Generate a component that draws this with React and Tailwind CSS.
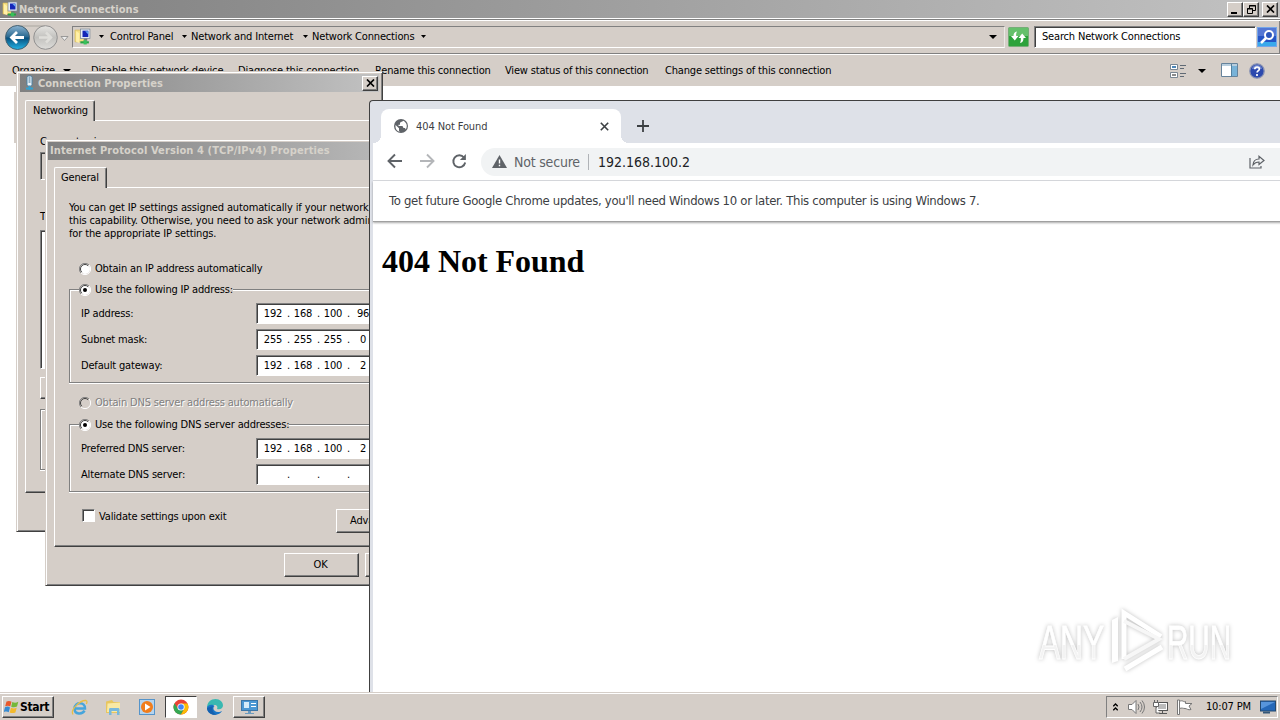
import React from 'react';
import clsx from 'clsx';

const raised = 'bg-[#d5cec8] border border-t-white border-l-white border-r-[#404040] border-b-[#404040] shadow-[inset_-1px_-1px_0_#808080]';
const sunken = 'bg-white border border-t-[#808080] border-l-[#808080] border-r-white border-b-white shadow-[inset_1px_1px_0_#404040]';

const Caret = ({ className, big }) => (
  <svg className={clsx('shrink-0', className)} width={big ? 8 : 5} height={big ? 4 : 3} viewBox="0 0 8 4" preserveAspectRatio="none">
    <path d="M0 0h8L4 4z" fill="#000" />
  </svg>
);

const NetworkIcon = ({ size }) => (
  <svg width={size} height={size} viewBox="0 0 16 16" className="shrink-0">
    <path d="M1 2h5l1 1h2v10H1z" fill="#f5df83" stroke="#d8b84e" strokeWidth=".6" />
    <path d="M2 3l3 2v9l-3-1z" fill="#fff0a8" />
    <rect x="6" y="1" width="9" height="9" fill="#e8eef7" stroke="#7b8796" strokeWidth=".7" />
    <rect x="8" y="2.5" width="5.5" height="6" fill="#1526b8" />
    <path d="M10.5 3h3v3z" fill="#65a9f4" />
    <path d="M9.5 10h3v2h-3z" fill="#777" />
    <path d="M6 12.5h8v2H6z" fill="#25a443" />
    <path d="M9 11.5h3v4H9z" fill="#38c15a" />
  </svg>
);

const CloseGlyph = () => (
  <svg width="9" height="8" viewBox="0 0 9 8">
    <path d="M1 .5l7 7M8 .5l-7 7" stroke="#000" strokeWidth="1.7" />
  </svg>
);

const CaptionButton = ({ children, className }) => (
  <div className={clsx('flex h-[15px] w-4 shrink-0 items-center justify-center', raised, className)}>{children}</div>
);

const crumbs = [
  { label: 'Control Panel', width: 'w-[66px]' },
  { label: 'Network and Internet', width: 'w-[106px]' },
  { label: 'Network Connections', width: 'w-[103px]' },
];

const commands = [
  { label: 'Disable this network device', width: 'w-[147px]' },
  { label: 'Diagnose this connection', width: 'w-[137px]' },
  { label: 'Rename this connection', width: 'w-[130px]' },
  { label: 'View status of this connection', width: 'w-[160px]' },
  { label: 'Change settings of this connection', width: 'w-[180px]' },
];

const Explorer = () => (
  <div className="flex h-[692px] flex-col bg-white">
    <div className="flex h-[18px] items-center bg-linear-to-r from-[#808080] to-[#c2c2c2] pl-0.5 pr-[2px]">
      <NetworkIcon size={16} />
      <span className="mt-px ml-px grow font-['DejaVu_Sans_Condensed'] text-[11px] font-bold tracking-[0.02px] text-[#d6d2ca]">Network Connections</span>
      <CaptionButton><span className="mt-[7px] -ml-0.5 h-0.5 w-1.5 bg-black" /></CaptionButton>
      <CaptionButton>
        <svg width="9" height="9" viewBox="0 0 9 9">
          <path d="M2.5 3V.5h6v5H6M2 1h7" fill="none" stroke="#000" />
          <path d="M.5 3.5h5v5h-5zM0 4h6" fill="none" stroke="#000" />
        </svg>
      </CaptionButton>
      <CaptionButton className="ml-[3px]"><CloseGlyph /></CaptionButton>
    </div>

    <div className="mt-px flex h-[35px] items-center border-y border-[#808080] bg-[#d5cec8] pr-0.5 shadow-[inset_0_1px_0_#fff,inset_-1px_0_0_#808080]">
      <svg width="72" height="28" viewBox="0 0 72 28" className="shrink-0">
        <defs>
          <linearGradient id="back" x1="0" y1="0" x2="0" y2="1">
            <stop offset="0" stopColor="#8cb4d2" />
            <stop offset=".48" stopColor="#28688f" />
            <stop offset=".52" stopColor="#07507e" />
            <stop offset="1" stopColor="#23b4e6" />
          </linearGradient>
          <linearGradient id="forward" x1="0" y1="0" x2="0" y2="1">
            <stop offset="0" stopColor="#e6e5e2" />
            <stop offset=".5" stopColor="#c2c1be" />
            <stop offset="1" stopColor="#deddda" />
          </linearGradient>
        </defs>
        <path d="M17 3h28" stroke="#aaa7a0" />
        <circle cx="17.5" cy="14.5" r="12" fill="url(#back)" stroke="#44606f" />
        <path d="M24 14.500H12m5-5.500L11.500 14.500l5.500 5.500" fill="none" stroke="#fff" strokeWidth="2.800" />
        <circle cx="45.500" cy="14.500" r="11.800" fill="url(#forward)" stroke="#929191" />
        <path d="M39 14.500h12m-5-5l5 5-5 5" fill="none" stroke="#dfdeda" strokeWidth="2.500" />
        <path d="M61 13.500h7l-3.500 4z" fill="#eee" stroke="#888" strokeWidth=".8" />
      </svg>
      <div className="flex h-[22px] w-[933px] items-center border border-t-[#808080] border-l-[#808080] border-r-[#eceae6] border-b-white pl-px">
        <NetworkIcon size={17} />
        <Caret className="ml-[8px] mr-[6px]" />
        {crumbs.map(({ label, width }) => (
          <div key={label} className="flex items-center">
            <span className={width}>{label}</span>
            <Caret className="mr-[4px] ml-[6px]" />
          </div>
        ))}
        <Caret big className="ml-auto mr-[7px]" />
      </div>
      <svg width="21" height="20" viewBox="0 0 21 20" className="ml-[3px] shrink-0">
        <rect x=".5" y=".5" width="20" height="19" rx="1" fill="#2da23b" stroke="#76ad78" />
        <path d="M1 1h19v8H1z" fill="#65c06b" />
        <path d="M9 4.500C6.500 5 5.500 6.500 5.500 9H3l3.800 4.500L10.500 9H8.200C8 7 8.200 6 9 4.500z" fill="#fff" />
        <path d="M12 16c2.500-.5 3.500-2 3.500-5H18l-3.800-4.500L10.500 11h2.300c.2 2 0 3.500-.8 5z" fill="#fff" />
      </svg>
      <div className={clsx('ml-[5px] flex h-[22px] w-[222px] items-center pl-[7px]', sunken)}>Search Network Connections</div>
      <svg width="20" height="20" viewBox="0 0 20 20" className="ml-px shrink-0">
        <rect x=".5" y=".5" width="19" height="19" fill="#2454c5" stroke="#75a6e8" />
        <path d="M1 1h18v8H1z" fill="#5477d4" />
        <path d="M1 15h18v4H1z" fill="#39a9eb" />
        <circle cx="12" cy="8" r="4" fill="#2b55bb" stroke="#fff" strokeWidth="2" />
        <path d="M9 11l-5 5" stroke="#fff" strokeWidth="2.500" />
      </svg>
    </div>

    <div className="flex h-8 items-center border-t border-white bg-[#d5cec8] pl-3">
      <span className="w-[51px] shrink-0">Organize</span>
      <Caret big className="mr-5" />
      {commands.map(({ label, width }) => <span key={label} className={clsx('shrink-0', width)}>{label}</span>)}
      <svg width="16" height="16" viewBox="0 0 16 16" className="ml-[325px] shrink-0">
        <path d="M.5 1.500h7v5h-7zM.5 9.500h7v5h-7z" fill="#fff" stroke="#7a8793" />
        <path d="M2 3h4v2H2z" fill="#4c86b8" />
        <path d="M2 11h4v2H2z" fill="#8b8b8b" />
        <path d="M10 2.500h6M10 5.500h4M10 10.500h6M10 13.500h4" stroke="#606a75" />
      </svg>
      <Caret big className="ml-3" />
      <svg width="17" height="15" viewBox="0 0 17 15" className="ml-[15px] shrink-0">
        <path d="M.5.500h16v13H.5z" fill="#fff" stroke="#66839b" />
        <path d="M1 1h15v2H1z" fill="#b8cede" />
        <path d="M11 3h5v10h-5z" fill="#78b3d8" />
        <path d="M10.500 1v13" stroke="#54819f" />
      </svg>
      <svg width="16" height="16" viewBox="0 0 16 16" className="ml-[11px] shrink-0">
        <circle cx="8" cy="8" r="7.200" fill="#2c49ae" stroke="#8791b3" strokeWidth="1.300" />
        <path d="M3 6a5 4 0 0 1 10 0z" fill="#6c83cd" />
        <path d="M5.800 6.300c0-3 4.600-3 4.600-.3 0 1.700-2.300 1.700-2.300 3.600M8 11v2" fill="none" stroke="#fff" strokeWidth="1.700" />
      </svg>
    </div>
    <div className="mt-1.5 ml-3.5 h-[51px] w-0.5 bg-[#d5cec8]" />
  </div>
);

const windowEdge = 'bg-[#d5cec8] border border-t-[#d5cec8] border-l-[#d5cec8] border-r-[#404040] border-b-[#404040] shadow-[inset_1px_1px_0_#fff,inset_-1px_-1px_0_#808080]';

const Tab = ({ children, className }) => (
  <div className={clsx('relative z-10 -mb-px rounded-t-[2px] border-t border-l border-white border-r border-r-[#404040] bg-[#d5cec8] shadow-[inset_-1px_0_0_#808080]', className)}>
    {children}
  </div>
);

const ConnectionProperties = () => (
  <div className={clsx('absolute top-[71px] left-4 h-[461px] w-[367px] p-[3px] pt-0.5', windowEdge)}>
    <div className="flex h-[18px] items-center bg-linear-to-r from-[#808080] to-[#c2c2c2] pr-px pl-1">
      <svg width="11" height="16" viewBox="0 0 11 16">
        <rect x="3" y="1" width="5" height="10" rx="1.500" fill="#edf3f7" stroke="#4981a6" />
        <path d="M4.500 3h2M4.500 5h2M4.500 7h2" stroke="#2f6890" />
        <path d="M5.500 11v4M2 13.500h7" stroke="#34a1d0" strokeWidth="2" />
      </svg>
      <span className="mt-px ml-[3px] grow font-['DejaVu_Sans_Condensed'] text-[11px] font-bold tracking-[0.02px] text-[#d6d2ca]">Connection Properties</span>
      <CaptionButton><CloseGlyph /></CaptionButton>
    </div>
    <div className="mt-[8px] ml-[5px] w-[330px]">
      <Tab className="h-[21px] w-[70px] pt-[3px] pl-[7px]">Networking</Tab>
      <div className="h-[373px] w-[360px] border-t border-l border-white border-b border-b-[#404040] pt-3.5 pl-3.5 shadow-[inset_0_-1px_0_#808080]">
        <p className="leading-[14px]">Connect using:</p>
        <div className="mt-[3px] h-7 border border-t-[#808080] border-l-[#808080] border-b-white shadow-[inset_1px_1px_0_#404040]" />
        <p className="mt-[30px] leading-[14px]">This connection uses the following items:</p>
        <div className={clsx('mt-[6px] h-[139px]', sunken)} />
        <div className={clsx('mt-2 h-[22px] w-[90px]', raised)} />
        <div className="mt-[10px] h-[61px] border border-[#808080] shadow-[inset_1px_1px_0_#fff,0_1px_0_#fff]" />
      </div>
    </div>
  </div>
);

const Radio = ({ checked, disabled }) => (
  <svg width="12" height="12" viewBox="0 0 12 12" className="mb-px shrink-0">
    <circle cx="6" cy="6" r="5" fill={disabled ? '#d5cec8' : '#fff'} />
    <path d="M2 10A5.500 5.500 0 0 1 10 2" fill="none" stroke="#808080" />
    <path d="M2.800 9.200A4.500 4.500 0 0 1 9.200 2.800" fill="none" stroke="#404040" />
    <path d="M10 2A5.500 5.500 0 0 1 2 10" fill="none" stroke="#fff" />
    {checked && <circle cx="6" cy="6" r="2" fill="#000" />}
  </svg>
);

const RadioRow = ({ label, checked, disabled, className }) => (
  <div className={clsx('flex h-[14px] w-max items-center gap-1 bg-[#d5cec8]', className, disabled && 'text-[#808080] [text-shadow:1px_1px_0_#fff]')}>
    <Radio checked={checked} disabled={disabled} />
    <span>{label}</span>
  </div>
);

const IpRow = ({ label, parts }) => (
  <div className="flex h-[21px] items-center">
    <span className="w-[175px]">{label}</span>
    <div className={clsx('flex h-[21px] w-[160px] items-center pl-1', sunken)}>
      {parts.map((part, i) => (
        <div key={i} className="flex">
          <span className="w-[24px] text-center">{part}</span>
          {i < 3 && <span className="w-1.5 pl-px text-center">.</span>}
        </div>
      ))}
    </div>
  </div>
);

const group = 'border border-[#808080] shadow-[inset_1px_1px_0_#fff,0_1px_0_#fff]';

const Ipv4Properties = () => (
  <div className={clsx('absolute top-[139px] left-[45px] h-[447px] w-[400px] p-0.5', windowEdge)}>
    <div className="flex h-[18px] items-center bg-linear-to-r from-[#808080] to-[#c2c2c2] pl-0.5 font-['DejaVu_Sans_Condensed'] text-[11px] font-bold tracking-[0.11px] text-[#d6d2ca]">
      Internet Protocol Version 4 (TCP/IPv4) Properties
    </div>
    <div className="mt-[7px] ml-1.5">
      <Tab className="h-[21px] w-[53px] pt-[3px] pl-1.5">General</Tab>
      <div className="h-[360px] border-t border-l border-white border-b border-b-[#404040] pl-3.5 shadow-[inset_0_-1px_0_#808080]">
        <p className="-ml-px pt-[13px] pl-px leading-[13px] tracking-[-0.13px] whitespace-pre">
          {'You can get IP settings assigned automatically if your network supports\nthis capability. Otherwise, you need to ask your network administrator\nfor the appropriate IP settings.'}
        </p>
        <RadioRow label="Obtain an IP address automatically" className="mt-[22px] ml-2.5" />
        <div className={clsx('mt-[13px] h-[94px]', group)}>
          <RadioRow label="Use the following IP address:" checked className="-mt-[7px] ml-[9px]" />
          <div className="mt-[6px] flex flex-col gap-[5px] pl-[11px]">
            <IpRow label="IP address:" parts={['192', '168', '100', '96']} />
            <IpRow label="Subnet mask:" parts={['255', '255', '255', '0']} />
            <IpRow label="Default gateway:" parts={['192', '168', '100', '2']} />
          </div>
        </div>
        <RadioRow label="Obtain DNS server address automatically" disabled className="mt-[13px] ml-2.5" />
        <div className={clsx('mt-[14px] h-[68px]', group)}>
          <RadioRow label="Use the following DNS server addresses:" checked className="-mt-[7px] ml-[9px]" />
          <div className="mt-[6px] flex flex-col gap-[5px] pl-[11px]">
            <IpRow label="Preferred DNS server:" parts={['192', '168', '100', '2']} />
            <IpRow label="Alternate DNS server:" parts={['', '', '', '']} />
          </div>
        </div>
        <div className="mt-[17px] flex pl-[13px]">
          <div className={clsx('size-[13px]', sunken)} />
          <span className="mt-px ml-1 w-[127px] leading-[14px]">Validate settings upon exit</span>
          <div className={clsx('ml-[110px] flex h-6 w-20 items-center pl-[13px]', raised)}>Advanced...</div>
        </div>
      </div>
    </div>
    <div className="mt-1.5 flex gap-1.5 pl-[236px]">
      <div className={clsx('flex h-6 w-[75px] items-center justify-center pr-0.5', raised)}>OK</div>
      <div className={clsx('flex h-6 w-[76px] items-center justify-center', raised)}>Cancel</div>
    </div>
  </div>
);

const Browser = () => (
  <div className="absolute top-[100px] left-[369px] h-[592px] w-[920px] overflow-hidden rounded-tl-[4px] border-t border-l border-[#404040] bg-[#dee1e8] pl-[3px] text-[#3c4043]">
    <div className="flex h-[42px] items-end pl-2">
      <div className="relative flex h-[34px] w-60 items-center rounded-t-lg bg-white pr-3 pl-[13px] text-[11px]">
        <svg width="14" height="14" viewBox="0 0 14 14">
          <circle cx="7" cy="7" r="7" fill="#5f6368" />
          <path d="M1.500 6l3.500 3.200V12l1 .7C3 12.400 1.200 10 1.500 6zM9 1.700c-1 1.800-3 1-3 2.500v1.500H4.500V7h4l1 2h1.500l.7 1.500C14 7 12.500 3 9 1.700z" fill="#fff" />
        </svg>
        <span className="mt-px ml-2 grow tracking-[-0.1px]">404 Not Found</span>
        <svg width="9" height="9" viewBox="0 0 9 9">
          <path d="M.8.800l7.400 7.400M8.200.800L.8 8.200" stroke="#3c4043" strokeWidth="1.600" />
        </svg>
        <span className="absolute bottom-0 -left-2 size-2 bg-[radial-gradient(circle_at_0_0,transparent_8px,#fff_8px)]" />
        <span className="absolute -right-2 bottom-0 size-2 bg-[radial-gradient(circle_at_100%_0,transparent_8px,#fff_8px)]" />
      </div>
      <svg width="12" height="12" viewBox="0 0 12 12" className="mb-[11px] ml-4">
        <path d="M6 0v12M0 6h12" stroke="#3c4043" strokeWidth="1.800" />
      </svg>
    </div>

    <div className="flex h-[38px] items-center border-b border-[#dadce0] bg-white pl-[14px]">
      <svg width="80" height="16" viewBox="0 0 80 16" className="mb-px shrink-0" fill="none" stroke="#5f6368" strokeWidth="1.900">
        <path d="M15 8H1.800M8 1.500L1.500 8 8 14.500" />
        <path d="M33 8h13.200M40 1.500L46.500 8 40 14.500" stroke="#b4b6b9" />
        <path d="M77 4.500A6 6 0 1 0 78.200 9.500" />
        <path d="M78.900 1v6h-6z" fill="#5f6368" stroke="none" />
      </svg>
      <div className="ml-[14px] flex h-7 grow items-center rounded-l-full bg-[#f1f3f4] pl-[11px] text-sm">
        <svg width="15" height="13" viewBox="0 0 15 13" className="shrink-0">
          <path d="M7.500 0L15 13H0z" fill="#5f6368" />
          <path d="M7.500 4.500V8.500M7.500 9.800v1.500" stroke="#fff" strokeWidth="1.400" />
        </svg>
        <span className="ml-[7px] w-[74px] tracking-[-0.2px] text-[#5f6368]">Not secure</span>
        <span className="h-4 w-px bg-[#b0b3b7]" />
        <span className="ml-[9px] tracking-[0px] text-[#202124]">192.168.100.2</span>
        <svg width="16" height="14" viewBox="0 0 16 14" className="mr-[24px] ml-auto" fill="none" stroke="#5f6368" strokeWidth="1.200">
          <path d="M1 3v10h11v-2" />
          <path d="M4 10c.3-4 2.500-6 6-6V1.300L15 5.500l-5 4V7C7.500 7 5.500 8 4 10z" />
        </svg>
      </div>
    </div>

    <div className="relative flex h-[41px] items-center border-b border-[#a0a0a0] bg-white pl-4 text-[13px] tracking-[-0.3px] shadow-[0_1px_2px_#00000055]">
      To get future Google Chrome updates, you'll need Windows 10 or later. This computer is using Windows 7.
    </div>
    <div className="h-[480px] bg-white pt-[21px] pl-[9px]">
      <h1 className="font-['Liberation_Serif'] text-[32px] leading-[37px] font-bold tracking-[-0.03px] text-black">404 Not Found</h1>
    </div>
  </div>
);

const Watermark = () => (
  <svg width="230" height="74" viewBox="0 0 230 74" className="absolute top-[603px] left-[1030px] drop-shadow-[0_0_2px_#00000040]">
    <defs>
      <linearGradient id="letters" x1="0" y1="0" x2="0" y2="1">
        <stop offset=".55" stopColor="#fff" />
        <stop offset=".56" stopColor="#f3f3f3" />
      </linearGradient>
    </defs>
    <g fill="url(#letters)" fontFamily="'Liberation Sans Narrow', 'Liberation Sans'" fontSize="49" stroke="#fff" strokeWidth=".8">
      <text x="9" y="56" textLength="65" lengthAdjust="spacingAndGlyphs">ANY</text>
      <text x="137" y="56" textLength="64" lengthAdjust="spacingAndGlyphs">RUN</text>
    </g>
    <path d="M82 60V17l6-3v44z" fill="#fff" />
    <path d="M94 56V10l37 23.500M95 66l37-22" fill="none" stroke="#fff" strokeWidth="5" />
    <path d="M94 56l35-20-35-18" fill="none" stroke="#f7f7f7" strokeWidth="4" />
  </svg>
);

const Taskbar = () => (
  <div className="flex h-7 items-center border-t border-[#d5cec8] bg-[#d5cec8] pt-px pr-0.5 pl-0.5 shadow-[inset_0_1px_0_#fff]">
    <div className={clsx('flex h-[22px] w-[52px] items-center pl-px', raised)}>
      <svg width="16" height="16" viewBox="0 0 16 16" className="shrink-0">
        <path d="M2.500 2.500c2-1 3.500-.7 5 .2L6.200 7.500c-1.500-1-3-1-5-.2z" fill="#e9592b" />
        <path d="M8.300 3c2 1 3.700 1 6-.2L13 7.500c-2 1-4 1-5.800.2z" fill="#74b83a" />
        <path d="M1 8.200c2-.9 3.500-.8 5 .2l-1.300 4.800c-1.500-1-3-1-5-.2z" fill="#378bd2" />
        <path d="M7 8.700c2 1 3.700 1 5.700 0l-1.300 4.700c-2 1-4 .9-5.700 0z" fill="#f3b92d" />
      </svg>
      <span className="font-['DejaVu_Sans_Condensed'] text-xs font-bold tracking-[-0.3px]">Start</span>
    </div>
    <svg width="17" height="17" viewBox="0 0 17 17" className="ml-[17px]">
      <path d="M4.500 9.500H14c.3-6.500-10-7.500-10.500 0 0 6.500 8 6 10 2.200" fill="none" stroke="#46a5dc" strokeWidth="2.500" />
      <path d="M2 15.500C-1 11 9 1 15 1.500c1.500.5 1 2.500.3 3.500" fill="none" stroke="#e8be45" strokeWidth="1.300" />
    </svg>
    <svg width="17" height="17" viewBox="0 0 17 17" className="ml-[17px]">
      <path d="M1 2.500L7 1l1.500 2H15v11H1z" fill="#e8c65f" />
      <path d="M2.500 4.500L15 3.500V13H2z" fill="#f9e9a4" />
      <path d="M4 16v-5.500c0-1 .5-1.500 1.500-1.500H13c1 0 1.500.5 1.500 1.500V16H12v-4H6.500v4z" fill="#78b8dc" />
    </svg>
    <svg width="16" height="16" viewBox="0 0 16 16" className="ml-[17px]">
      <rect x=".5" y=".5" width="15" height="15" fill="#b5d4ee" stroke="#5594ca" />
      <circle cx="8" cy="8" r="6" fill="#f17d1c" />
      <path d="M6 4.500v7L11.500 8z" fill="#fff" />
    </svg>
    <div className="ml-2.5 flex h-[22px] w-8 items-center justify-center border border-t-[#404040] border-l-[#404040] border-r-white border-b-white bg-white">
      <svg width="16" height="16" viewBox="0 0 16 16">
        <circle cx="8" cy="8" r="7.500" fill="#ea4335" />
        <path d="M1.500 4.200A7.500 7.500 0 0 0 8 15.500l3.200-5.700H5z" fill="#34a853" />
        <path d="M8 15.500A7.500 7.500 0 0 0 14.500 4.500H8l3.300 5.300z" fill="#fbbc05" />
        <circle cx="8" cy="8" r="3.600" fill="#fff" />
        <circle cx="8" cy="8" r="2.800" fill="#4285f4" />
      </svg>
    </div>
    <svg width="16" height="16" viewBox="0 0 16 16" className="ml-2.5">
      <path d="M0 9C0 3 4 0 8.500 0 13 0 16 3 16 6.500c0 3-3 4.500-6 3.500 1-2 0-4-2.500-4C4 5.500 1 7 0 9z" fill="#39b8b1" />
      <path d="M0 8.500C1 5 6 5 7.500 7 5 9 7 13 11 13c2 0 3-.5 4-1-2 5-15 6-15-3.500z" fill="#1875c7" />
      <path d="M6 7c-2 4 1 8 4 8.500C5 17 0 13 0 9z" fill="#1560ae" />
    </svg>
    <div className={clsx('ml-2.5 flex h-[22px] w-8 items-center justify-center', raised)}>
      <svg width="17" height="16" viewBox="0 0 17 16">
        <rect x=".5" y="1.500" width="16" height="10" fill="#4c98d4" stroke="#3c76a7" />
        <rect x="3" y="3" width="5" height="6" fill="#d6ecfa" />
        <path d="M10 4.500h5M10 7.500h5" stroke="#fff" />
        <path d="M7 12h3v2h3v1H4v-1h3z" fill="#6c9bbf" />
      </svg>
    </div>
    <div className="ml-auto flex h-[22px] w-[172px] items-center border border-t-[#808080] border-l-[#808080] border-r-white border-b-white pl-1.5">
      <svg width="5" height="8" viewBox="0 0 5 8" fill="none" stroke="#000" strokeWidth="1.300">
        <path d="M.3 3.200L2.500 1l2.200 2.200M.3 7.200L2.500 5l2.200 2.200" />
      </svg>
      <svg width="17" height="14" viewBox="0 0 17 14" className="ml-2.5" fill="#fff" stroke="#777">
        <path d="M.5 4.500H4l4-4v13l-4-4H.5z" />
        <path d="M10 4q2 3 0 6M12 2q4 5 0 10M14 .500q5 6.500 0 13" fill="none" />
      </svg>
      <svg width="17" height="16" viewBox="0 0 17 16" className="ml-[7px]">
        <rect x="4.500" y="3.500" width="11" height="8" fill="#bbb" stroke="#555" />
        <path d="M5.500 4.500h9v6h-9z" fill="none" stroke="#fff" />
        <path d="M7 14.500h8M10.500 12v2" stroke="#555" />
        <path d="M1.500 3.500h5v4h-5zM2.500 1v2M5.500 1v2M4 8v6h4" fill="#fff" stroke="#666" />
      </svg>
      <svg width="17" height="16" viewBox="0 0 17 16" className="ml-[7px]" fill="#fff" stroke="#777">
        <path d="M1.500 1v14.500h2V1z" />
        <path d="M3.500 2.500c3-2 4 1 6 0v2h6.500L13 7l2 3.500c-3 1-4-1-6-1s-3-1-5.500 0z" />
      </svg>
      <span className="ml-[13px]">10:07 PM</span>
      <svg width="16" height="14" viewBox="0 0 16 14" className="ml-auto mr-px">
        <rect x=".5" y="1" width="15" height="10" fill="#2568b8" stroke="#24496f" />
        <path d="M1 2h14L1 9z" fill="#5795db" />
        <path d="M3 12.500h7" stroke="#345779" strokeWidth="2" />
      </svg>
    </div>
  </div>
);

export default function App() {
  return (
    <div className="relative h-[720px] w-[1280px] overflow-hidden bg-white font-['DejaVu_Sans_Condensed','DejaVu_Sans',sans-serif] text-[11px] leading-[14px] tracking-[-0.17px] whitespace-nowrap text-black">
      <Explorer />
      <ConnectionProperties />
      <Ipv4Properties />
      <Browser />
      <Watermark />
      <Taskbar />
    </div>
  );
}
